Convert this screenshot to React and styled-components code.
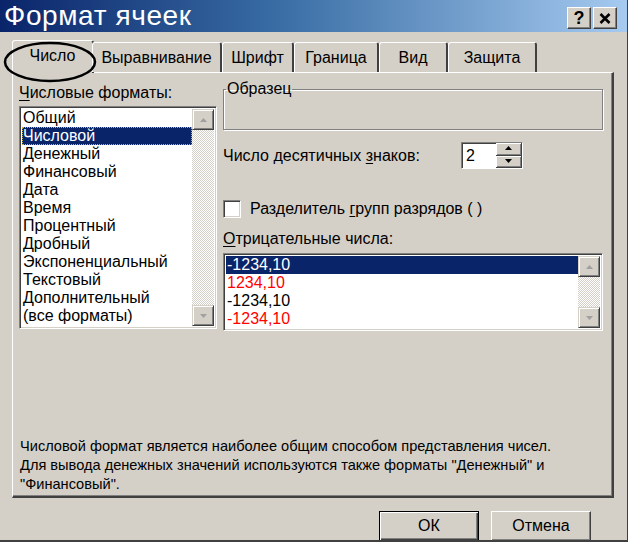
import React from 'react'
import styled, { createGlobalStyle } from 'styled-components'

const GlobalStyle = createGlobalStyle`
    body {
        margin: 0;
        background: #d4d0c8;
        font-family: "Liberation Sans", Arial, sans-serif;
    }
`

// window frame
const Window = styled.div`
    position: relative;
    width: 628px;
    height: 542px;
    background: #d4d0c8;
    box-sizing: border-box;
    border-right: 1px solid #404040;
    border-bottom: 2px solid #404040;
    display: flex;
    flex-direction: column;
    overflow: hidden;
`

const TitleBar = styled.div`
    height: 33px;
    background: linear-gradient(to right, #0a246a 0%, #3a6ea5 45%, #a6caf0 100%);
    display: flex;
    align-items: center;
    justify-content: space-between;
    padding: 0 10px 0 4px;
`

const TitleText = styled.span`
    color: #fff;
    font-size: 28px;
    letter-spacing: 0.6px;
`

const CaptionButtons = styled.div`
    display: flex;
    gap: 2px;
    margin-top: 4px;
`

const CaptionButton = styled.div`
    width: 24px;
    height: 22px;
    background: #d4d0c8;
    box-sizing: border-box;
    border-top: 1px solid #fff;
    border-left: 1px solid #fff;
    border-right: 1px solid #404040;
    border-bottom: 1px solid #404040;
    box-shadow: inset -1px -1px 0 #808080;
    display: flex;
    align-items: center;
    justify-content: center;
    font: bold 18px "Liberation Sans", Arial, sans-serif;
    color: #000;
`

const Body = styled.div`
    flex: 1;
    display: flex;
    flex-direction: column;
    padding: 8px 13px 0 12px;
`

// tabs
const TabRow = styled.div`
    display: flex;
    align-items: flex-end;
    height: 32px;
    padding-left: 2px;
    position: relative;
    z-index: 1;
`

const Tab = styled.div`
    box-sizing: border-box;
    width: ${p => p.$w}px;
    height: ${p => (p.$active ? 33 : 30)}px;
    margin: ${p => (p.$active ? '0 -2px -1px -2px' : '0')};
    background: #d4d0c8;
    border-top: 1px solid #fff;
    border-left: 1px solid #fff;
    border-right: 2px solid #404040;
    border-radius: 3px 3px 0 0;
    display: flex;
    align-items: center;
    justify-content: center;
    padding-bottom: ${p => (p.$active ? 3 : 0)}px;
    font-size: 16px;
    color: #000;
`

const Panel = styled.div`
    box-sizing: border-box;
    height: 426px;
    border-top: 1px solid #fff;
    border-left: 1px solid #fff;
    border-right: 2px solid #404040;
    border-bottom: 2px solid #404040;
    box-shadow: inset -1px -1px 0 #808080;
    display: flex;
    flex-direction: column;
    padding: 6px 9px 0 6px;
`

const Columns = styled.div`
    display: grid;
    grid-template-columns: 198px 1fr;
    column-gap: 6px;
`

const Column = styled.div`
    display: flex;
    flex-direction: column;
`

const Label = styled.div`
    font-size: 16px;
    line-height: 19px;
    color: #000;
    margin-top: ${p => p.$mt || 0}px;
    white-space: nowrap;
`

const U = styled.span`
    text-decoration: underline;
    text-underline-offset: 2px;
`

// list boxes
const ListBox = styled.div`
    box-sizing: border-box;
    height: ${p => p.$h}px;
    margin-top: ${p => p.$mt || 0}px;
    background: #fff;
    border-top: 1px solid #808080;
    border-left: 1px solid #808080;
    border-right: 1px solid #fff;
    border-bottom: 1px solid #fff;
    box-shadow: inset 1px 1px 0 #404040, inset -1px -1px 0 #d4d0c8;
    display: flex;
    padding: 2px;
`

const Items = styled.div`
    flex: 1;
    display: flex;
    flex-direction: column;
    min-width: 0;
`

const Item = styled.div`
    height: ${p => p.$h}px;
    line-height: ${p => p.$h}px;
    font-size: 16px;
    padding-left: 1px;
    white-space: nowrap;
    color: ${p => (p.$sel ? '#fff' : p.$red ? '#ff0000' : '#000')};
    background: ${p => (p.$sel ? '#0a246a' : 'transparent')};
    outline: ${p => (p.$focus ? '1px dotted #c9b34a' : 'none')};
    outline-offset: -1px;
`

const ScrollBar = styled.div`
    width: 22px;
    display: flex;
    flex-direction: column;
    background-color: #f4f3f1;
    background-image: repeating-conic-gradient(#d4d0c8 0 25%, #ffffff 0 50%);
    background-size: 2px 2px;
    justify-content: space-between;
`

const ScrollButton = styled.div`
    height: 21px;
    box-sizing: border-box;
    background: #d4d0c8;
    border-top: 1px solid #d4d0c8;
    border-left: 1px solid #d4d0c8;
    border-right: 1px solid #404040;
    border-bottom: 1px solid #404040;
    box-shadow: inset 1px 1px 0 #fff, inset -1px -1px 0 #808080;
    display: flex;
    align-items: center;
    justify-content: center;
`

const Arrow = ({ down }) => (
    <svg width="9" height="6" viewBox="0 0 9 6">
        <path d={down ? 'M1 1h7L4.5 5z' : 'M4.5 1L8 5H1z'} fill="#a0a0a0" />
    </svg>
)

// right column parts
const Group = styled.fieldset`
    margin: 0;
    margin-top: 2px;
    height: 49px;
    box-sizing: border-box;
    padding: 0;
    border: 1px solid #808080;
    box-shadow: 1px 1px 0 #fff, inset 1px 1px 0 #fff;
`

const Legend = styled.legend`
    font-size: 16px;
    padding: 0 1px;
    margin-left: 2px;
    line-height: 16px;
`

const SpinRow = styled.div`
    display: grid;
    grid-template-columns: 238px auto;
    align-items: center;
    margin-top: 12px;
`

const Spinner = styled.div`
    display: flex;
    width: 62px;
    height: 27px;
    box-sizing: border-box;
    background: #fff;
    border-top: 1px solid #808080;
    border-left: 1px solid #808080;
    border-right: 1px solid #fff;
    border-bottom: 1px solid #fff;
    box-shadow: inset 1px 1px 0 #404040;
`

const SpinValue = styled.div`
    flex: 1;
    padding-left: 4px;
    font-size: 16px;
    line-height: 25px;
`

const SpinButtons = styled.div`
    width: 26px;
    display: flex;
    flex-direction: column;
`

const SpinButton = styled.div`
    flex: 1;
    box-sizing: border-box;
    background: #d4d0c8;
    border-right: 1px solid #404040;
    border-bottom: 1px solid #404040;
    box-shadow: inset 1px 1px 0 #fff, inset -1px -1px 0 #808080;
    display: flex;
    align-items: center;
    justify-content: center;
`

const SpinArrow = ({ down }) => (
    <svg width="9" height="5" viewBox="0 0 9 5">
        <path d={down ? 'M1 0h7L4.5 4z' : 'M4.5 0L8 4H1z'} fill="#000" />
    </svg>
)

const CheckRow = styled.div`
    display: flex;
    align-items: center;
    gap: 9px;
    margin-top: 30px;
`

const CheckBox = styled.div`
    width: 18px;
    height: 18px;
    box-sizing: border-box;
    background: #fff;
    border-top: 1px solid #808080;
    border-left: 1px solid #808080;
    border-right: 1px solid #fff;
    border-bottom: 1px solid #fff;
    box-shadow: inset 1px 1px 0 #404040, inset -1px -1px 0 #d4d0c8;
`

const Description = styled.div`
    margin-top: auto;
    margin-bottom: 2px;
    padding-left: 1px;
    font-size: 14.6px;
    line-height: 19px;
    color: #000;
    white-space: nowrap;
`

// bottom buttons
const ButtonBar = styled.div`
    display: flex;
    justify-content: flex-end;
    gap: 12px;
    padding: 13px 23px 0 0;
`

const Button = styled.div`
    width: 100px;
    height: 30px;
    box-sizing: border-box;
    background: #d4d0c8;
    border: 1px solid ${p => (p.$default ? '#000' : '#fff')};
    border-right-color: ${p => (p.$default ? '#000' : '#404040')};
    border-bottom-color: ${p => (p.$default ? '#000' : '#404040')};
    box-shadow: ${p =>
        p.$default
            ? 'inset 1px 1px 0 #fff, inset -1px -1px 0 #404040, inset -2px -2px 0 #808080'
            : 'inset -1px -1px 0 #808080'};
    display: flex;
    align-items: center;
    justify-content: center;
    font-size: 16px;
    color: #000;
`

// hand-drawn annotation round the first tab
const Circle = styled.svg`
    position: absolute;
    left: 2px;
    top: 40px;
    z-index: 2;
    pointer-events: none;
`

const CloseGlyph = () => (
    <svg width="12" height="11" viewBox="0 0 12 11">
        <path d="M1.5 1l9 9M10.5 1l-9 9" stroke="#000" strokeWidth="2.6" />
    </svg>
)

const formats = [
    'Общий', 'Числовой', 'Денежный', 'Финансовый', 'Дата', 'Время',
    'Процентный', 'Дробный', 'Экспоненциальный', 'Текстовый',
    'Дополнительный', '(все форматы)',
]

const negatives = [
    { text: '-1234,10', sel: true },
    { text: '1234,10', red: true },
    { text: '-1234,10' },
    { text: '-1234,10', red: true },
]

const tabs = [
    { label: 'Число', w: 82 },
    { label: 'Выравнивание', w: 130 },
    { label: 'Шрифт', w: 72 },
    { label: 'Граница', w: 85 },
    { label: 'Вид', w: 69 },
    { label: 'Защита', w: 89 },
]

const App = () => {
    return (
        <>
            <GlobalStyle />
            <Window>
                <TitleBar>
                    <TitleText>Формат ячеек</TitleText>
                    <CaptionButtons>
                        <CaptionButton>?</CaptionButton>
                        <CaptionButton><CloseGlyph /></CaptionButton>
                    </CaptionButtons>
                </TitleBar>
                <Body>
                    <TabRow>
                        {tabs.map((t, i) => (
                            <Tab key={t.label} $w={t.w} $active={i === 0}>{t.label}</Tab>
                        ))}
                    </TabRow>
                    <Panel>
                        <Columns>
                            <Column>
                                <Label $mt={4}><U>Ч</U>исловые форматы:</Label>
                                <ListBox $h={223} $mt={4}>
                                    <Items>
                                        {formats.map((f, i) => (
                                            <Item key={f} $h={18} $sel={i === 1} $focus={i === 1}>{f}</Item>
                                        ))}
                                    </Items>
                                    <ScrollBar>
                                        <ScrollButton><Arrow /></ScrollButton>
                                        <ScrollButton><Arrow down /></ScrollButton>
                                    </ScrollBar>
                                </ListBox>
                            </Column>
                            <Column>
                                <Group>
                                    <Legend>Образец</Legend>
                                </Group>
                                <SpinRow>
                                    <Label>Число десятичных <U>з</U>наков:</Label>
                                    <Spinner>
                                        <SpinValue>2</SpinValue>
                                        <SpinButtons>
                                            <SpinButton><SpinArrow /></SpinButton>
                                            <SpinButton><SpinArrow down /></SpinButton>
                                        </SpinButtons>
                                    </Spinner>
                                </SpinRow>
                                <CheckRow>
                                    <CheckBox />
                                    <Label>Разделитель <U>г</U>рупп разрядов ( )</Label>
                                </CheckRow>
                                <Label $mt={11}><U>О</U>трицательные числа:</Label>
                                <ListBox $h={78} $mt={5}>
                                    <Items>
                                        {negatives.map((n, i) => (
                                            <Item key={i} $h={18} $sel={n.sel} $red={n.red}>{n.text}</Item>
                                        ))}
                                    </Items>
                                    <ScrollBar>
                                        <ScrollButton><Arrow /></ScrollButton>
                                        <ScrollButton><Arrow down /></ScrollButton>
                                    </ScrollBar>
                                </ListBox>
                            </Column>
                        </Columns>
                        <Description>
                            Числовой формат является наиболее общим способом представления чисел.<br />
                            Для вывода денежных значений используются также форматы "Денежный" и<br />
                            "Финансовый".
                        </Description>
                    </Panel>
                    <ButtonBar>
                        <Button $default>ОК</Button>
                        <Button>Отмена</Button>
                    </ButtonBar>
                </Body>
                <Circle width="96" height="46" viewBox="0 0 96 46">
                    <ellipse cx="48" cy="22" rx="45" ry="19" fill="none" stroke="#000" strokeWidth="2.5" />
                </Circle>
            </Window>
        </>
    )
}

export default App
